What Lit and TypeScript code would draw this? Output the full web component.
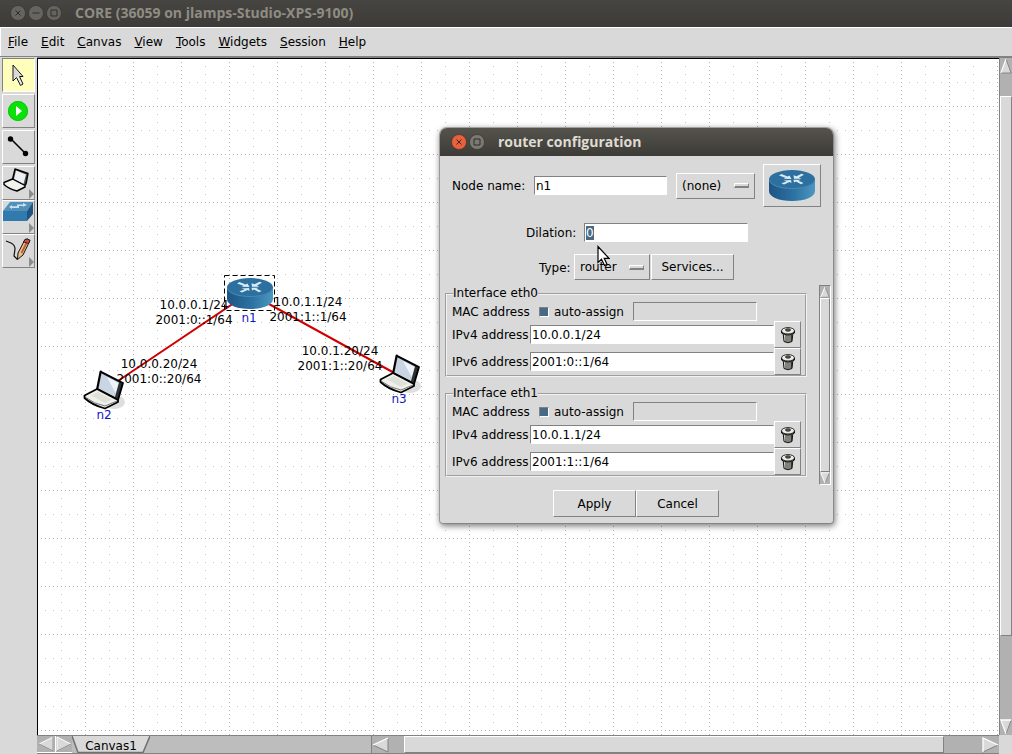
import { LitElement, html, svg, css } from "lit";
import { customElement, property } from "lit/decorators.js";
import { classMap } from "lit/directives/class-map.js";

const router = svg`
  <defs>
    <linearGradient id="side" x1="0" x2="1" y1="0" y2="0">
      <stop offset="0" stop-color="#1f5482"></stop>
      <stop offset="0.55" stop-color="#2c73a3"></stop>
      <stop offset="1" stop-color="#4d97c1"></stop>
    </linearGradient>
  </defs>
  <path d="M0 9V21C0 27 10 31 23 31S46 27 46 21V9Z" fill="url(#side)"></path>
  <ellipse cx="23" cy="9.500" rx="23" ry="9.500" fill="#2d6f9f"></ellipse>
  <path d="M0.500 10C1 15 11 18.500 23 18.500S45 15 45.500 10" fill="none" stroke="#5b9cc4" stroke-width="0.600"></path>
  <g fill="#d8ecf5">
    <path d="M10 5.500L12.500 4L18.500 6.600L20.500 5.500L22.500 9L14.500 8.800L16.500 7.800Z"></path>
    <path d="M25 8.800L24.500 5.200L27.500 6.200L32.500 3.800L35 4.800L30 7.500L32.500 8.800Z"></path>
    <path d="M12.500 13.200L15 14.500L20.500 12L22.500 13L22 9.900L14.500 10.400L17.500 11.400Z"></path>
    <path d="M34.500 13L32 14.200L27 11.600L25 12.600L24.500 9.800L31.500 9.800L29.500 10.700Z"></path>
  </g>`;

const laptop = svg`
  <ellipse cx="31" cy="32" rx="11" ry="7" fill="#000" opacity="0.130"></ellipse>
  <path d="M17.500 1.500L40 13L35 30L14 19Z" fill="#2b3034" stroke="#000" stroke-width="1.800" stroke-linejoin="round"></path>
  <path d="M18.500 3.500L36 12.500L32 27L15.500 18.500Z" fill="#c9d5e2"></path>
  <path d="M24 7L35.500 13L32.500 23Z" fill="#eef3f8"></path>
  <path d="M1.500 25.500L14 19L35 30V32L22 38.500Q9 35 1.500 28Z" fill="#f0f0ea" stroke="#000" stroke-width="1.800" stroke-linejoin="round"></path>
  <path d="M8 25.500L15 22L29 29.500L22 33Z" fill="#e0e0da"></path>
  <path d="M2 27Q11 34 22 36L34 31" fill="none" stroke="#555" stroke-width="0.800"></path>`;

const trash = html`<svg viewBox="0 0 16 18" width="16" height="18" aria-hidden="true">
  <path d="M3 6L4 15.500Q8 18 12 15.500L13 6Z" fill="#d0d0c8" stroke="#111"></path>
  <path d="M6 8.500V16M8 9V16.500M10 9V16M11.500 8.500V15" stroke="#222" stroke-width="0.900"></path>
  <path d="M1.500 5V7Q8 11 14.500 7V5Z" fill="#b8b8b0" stroke="#111"></path>
  <ellipse cx="8" cy="4.800" rx="6.500" ry="3.200" fill="#ecece4" stroke="#111" stroke-width="0.900"></ellipse>
  <ellipse cx="8" cy="4" rx="2.600" ry="1.300" fill="#555" stroke="#222" stroke-width="0.700"></ellipse>
</svg>`;

const bevel = css`
  * { box-sizing: border-box; }
  button, input, select, legend, fieldset { font: inherit; color: inherit; margin: 0; border-radius: 0; }
  button, select { appearance: none; background: #d9d9d9; border: 1px solid; border-color: #fff #828282 #828282 #fff; padding: 0; outline: none; }
  svg { display: block; }
  .titlebar { display: flex; align-items: center; font: bold 14px/18px "Open Sans", "Noto Sans", sans-serif; }
  .wm { display: flex; gap: 2px; }
  .wm button { width: 16px; height: 16px; border: 0; background: none; }
`;

@customElement("wm-glyph")
class WmGlyph extends LitElement {
  @property() kind = "close";
  @property() fill = "#66645e";
  static styles = css`:host { display: block; } svg { display: block; }`;
  render() {
    const marks: Record<string, string> = {
      close: "M5.500 5.500L10.500 10.500M10.500 5.500L5.500 10.500",
      min: "M4.500 8H11.500",
      max: "M5 5H11V11H5Z",
    };
    return html`<svg viewBox="0 0 16 16" width="16" height="16">
      <circle cx="8" cy="8" r="7.500" fill=${this.fill} stroke="#33322e" stroke-width="0.600"></circle>
      <path d=${marks[this.kind]} fill="none" stroke="#302e2a" stroke-width="1"></path>
    </svg>`;
  }
}

@customElement("tk-scrollbar")
class TkScrollbar extends LitElement {
  @property({ type: Boolean, reflect: true }) vertical = false;
  @property({ type: Number }) before = 0;
  @property({ type: Number }) thumb = 1;
  @property({ type: Number }) after = 0;
  @property({ type: Number }) arrowSize = 16;
  static styles = [bevel, css`
    :host { display: flex; background: #b1b1b1; min-width: 0; min-height: 0; }
    :host([vertical]) { flex-direction: column; }
    button { flex: none; border: 0; background: none; }
    .track { flex: 1; display: flex; min-width: 0; min-height: 0; }
    :host([vertical]) .track { flex-direction: column; }
    .thumb { background: #d9d9d9; border: 1px solid; border-color: #fff #828282 #828282 #fff; }
  `];
  arrow(dir: string) {
    const shapes: Record<string, string[]> = {
      up: ["M7 1L13 15H1Z", "M1 15L7 1", "M7 1L13 15H1"],
      down: ["M1 1H13L7 15Z", "M13 1H1L7 15", "M13 1L7 15"],
      left: ["M1 8L16 1V15Z", "M1 8L16 1", "M16 1V15L1 8"],
      right: ["M1 1L16 8L1 15Z", "M1 15V1L16 8", "M16 8L1 15"],
    };
    const [face, light, dark] = shapes[dir];
    const w = this.vertical ? 14 : 17;
    return html`<svg viewBox="0 0 ${w} 16" width=${this.vertical ? "100%" : w} height=${this.arrowSize} preserveAspectRatio="none">
      <path d=${face} fill="#d9d9d9"></path>
      <path d=${dark} fill="none" stroke="#828282"></path>
      <path d=${light} fill="none" stroke="#fff" stroke-width="1.300"></path>
    </svg>`;
  }
  render() {
    return html`
      <button aria-label="Scroll back">${this.arrow(this.vertical ? "up" : "left")}</button>
      <div class="track">
        <div style="flex:${this.before}"></div>
        <div class="thumb" style="flex:${this.thumb}"></div>
        <div style="flex:${this.after}"></div>
      </div>
      <button aria-label="Scroll forward">${this.arrow(this.vertical ? "down" : "right")}</button>`;
  }
}

@customElement("router-dialog")
class RouterDialog extends LitElement {
  static styles = [bevel, css`
    :host { display: block; background: #d9d9d9; border-radius: 7px 7px 3px 3px; box-shadow: 0 0 0 1px #77777788, 1px 2px 6px 1px #00000088; }
    .titlebar { height: 28px; padding-left: 11px; gap: 13px; color: #dfdbd2; background: linear-gradient(#55534c, #3c3b37); border-radius: 7px 7px 0 0; }
    .body { padding: 8px 2px 6px 5px; }
    .row { display: flex; align-items: center; }
    .row label { padding-top: 2px; }
    .name { height: 43px; padding: 0 10px 0 7px; }
    .name label { width: 82px; }
    .name input { width: 133px; margin-right: 9px; }
    .name .icon { width: 58px; height: 43px; margin-left: auto; display: grid; place-items: center; }
    .dilation { margin-top: 16px; padding-left: 81px; }
    .dilation label { width: 58px; }
    .dilation input { width: 164px; }
    .type { margin-top: 12px; padding-left: 94px; }
    .type label { width: 35px; }
    .type .services { width: 83px; height: 26px; margin-left: 1px; }
    .entry { height: 19px; padding: 0 1px; border: 1px solid; border-color: #828282 #fff #fff #828282; background: #fff; line-height: 17px; outline: none; }
    .entry:disabled { background: #d9d9d9; }
    .entry::selection { background: #4a6984; color: #fff; }
    .menu { display: grid; align-items: center; }
    .menu > * { grid-area: 1 / 1; }
    .menu select { height: 26px; padding: 1px 5px 0; }
    .menu i { justify-self: end; width: 15px; height: 5px; margin-right: 6px; pointer-events: none; background: #d9d9d9; border: 1px solid; border-color: #fff #828282 #828282 #fff; border-bottom-width: 2px; }
    .pick { width: 79px; }
    .kind { width: 76px; }
    .list { display: flex; justify-content: space-between; margin-top: 5px; height: 200px; }
    .frames { width: 362px; display: flex; flex-direction: column; gap: 9px; padding-top: 1px; }
    fieldset { min-width: 0; padding: 0 4px 0 5px; border: 2px groove #f2f2f2; }
    legend { padding: 0; margin-left: 1px; height: 15px; line-height: 15px; }
    .mac { height: 20px; }
    .addr { height: 27px; }
    .row .tag { width: 78px; white-space: nowrap; }
    .addr .entry { flex: 1; min-width: 0; }
    .addr button { width: 27px; height: 27px; display: grid; place-items: center; }
    .check { display: flex; align-items: center; gap: 5px; width: 94px; margin: 0 0 0 9px; }
    .check input { appearance: none; width: 10px; height: 10px; border: 1px solid; border-color: #828282 #fff #fff #828282; }
    .check input:checked { background: #4a6984; }
    .mac .entry { width: 124px; }
    tk-scrollbar { width: 12px; border: 1px solid; border-color: #828282 #fff #fff #828282; }
    .actions { display: flex; justify-content: center; margin-top: 5px; padding-right: 4px; }
    .actions button { width: 83px; height: 27px; padding-top: 1px; }
  `];

  firstUpdated() {
    const field = this.renderRoot.querySelector<HTMLInputElement>("#dilation");
    field?.focus();
    field?.select();
  }

  iface(name: string, v4: string, v6: string) {
    return html`<fieldset>
      <legend>Interface ${name}</legend>
      <div class="row mac">
        <label class="tag" for="${name}-mac">MAC address</label>
        <label class="check"><input type="checkbox" checked>auto-assign</label>
        <input class="entry" id="${name}-mac" disabled>
      </div>
      ${[["IPv4", v4], ["IPv6", v6]].map(([kind, value]) => html`
        <div class="row addr">
          <label class="tag" for="${name}-${kind}">${kind} address</label>
          <input class="entry" id="${name}-${kind}" .value=${value}>
          <button aria-label="Clear ${kind} address">${trash}</button>
        </div>`)}
    </fieldset>`;
  }

  render() {
    return html`
      <header class="titlebar">
        <div class="wm">
          <button aria-label="Close"><wm-glyph kind="close" fill="#e9603a"></wm-glyph></button>
          <button aria-label="Maximize"><wm-glyph kind="max" fill="#7b7971"></wm-glyph></button>
        </div>
        router configuration
      </header>
      <div class="body">
        <div class="row name">
          <label for="name">Node name:</label>
          <input class="entry" id="name" value="n1">
          <span class="menu pick"><select aria-label="Location"><option>(none)</option></select><i></i></span>
          <button class="icon" aria-label="Node icon"><svg viewBox="0 0 46 31" width="46" height="31">${router}</svg></button>
        </div>
        <div class="row dilation">
          <label for="dilation">Dilation:</label>
          <input class="entry" id="dilation" value="0">
        </div>
        <div class="row type">
          <label for="type">Type:</label>
          <span class="menu kind"><select id="type"><option>router</option></select><i></i></span>
          <button class="services">Services...</button>
        </div>
        <div class="list">
          <div class="frames">
            ${this.iface("eth0", "10.0.0.1/24", "2001:0::1/64")}
            ${this.iface("eth1", "10.0.1.1/24", "2001:1::1/64")}
          </div>
          <tk-scrollbar vertical .arrowSize=${12} .before=${0} .thumb=${1} .after=${0}></tk-scrollbar>
        </div>
        <div class="actions"><button>Apply</button><button>Cancel</button></div>
      </div>`;
  }
}

const tools = [
  { id: "select", more: false, art: svg`<path d="M10 6V22L13.500 18.500L17.500 26.500L20 25L16.500 17.500H20Z" fill="#e8e8e8" stroke="#111"></path><path d="M11 9V19L18 16.500Z" fill="#d8d8d8"></path>` },
  { id: "start", more: false, art: svg`<circle cx="15" cy="16" r="10" fill="#0be00b"></circle><circle cx="15" cy="16" r="9.500" fill="none" stroke="#08c808"></circle><path d="M13 11L19 16L13 21Z" fill="#fff"></path>` },
  { id: "link", more: false, art: svg`<path d="M8 8L22 22" stroke="#000" stroke-width="1.600"></path><circle cx="7.500" cy="8" r="2.700"></circle><circle cx="22.500" cy="22.500" r="2.700"></circle>` },
  { id: "host", more: true, art: svg`<path d="M12 2L25 6.500L23 17L21 19L9.500 12.500Z" fill="#555" stroke="#000" stroke-width="1.400" stroke-linejoin="round"></path><path d="M13 3.500L23 7.500L20.500 17L11 12Z" fill="#eef1f4"></path><path d="M1 15.500L9.500 12L22 18.500V20L14 24Q6 22 1 17.500Z" fill="#f3f3ee" stroke="#000" stroke-width="1.400" stroke-linejoin="round"></path>` },
  { id: "switch", more: true, art: svg`<path d="M0 10L7 1H30L24 10Z" fill="#5090ba"></path><path d="M24 10L30 1V13L24 20Z" fill="#1f5480"></path><path d="M0 10H24V20H0Z" fill="#317aae"></path><path d="M6 6L9 4V5.200H14V3.500H20V2L24 4L20 5.800V5H16V7H9V8Z" fill="#c9e2ef"></path>` },
  { id: "marker", more: true, art: svg`<path d="M3 6L8 8Q12 10 12 14L11 21L14.500 24.500" fill="none" stroke="#111" stroke-width="1.200"></path><path d="M14.500 24.500L15 18L22 4.500Q25 3 27 5.500L20 20Z" fill="#e8c08c" stroke="#111"></path><path d="M18.500 18L24 7" stroke="#c05a30" stroke-width="1.800"></path><path d="M22 4.500Q25 3 27 5.500L25.500 8.500L20.500 7Z" fill="#c84a44" stroke="#111" stroke-width="0.800"></path>` },
];

@customElement("app-root")
class AppRoot extends LitElement {
  static styles = [bevel, css`
    :host { display: flex; flex-direction: column; height: 100vh; position: relative; overflow: hidden; background: #d9d9d9; color: #000; font: 12px/15px "DejaVu Sans", sans-serif; }
    .titlebar { flex: none; height: 27px; padding: 0 0 1px 10px; gap: 13px; color: #8f8c83; background: linear-gradient(#464541, #3c3b37); }
    .menubar { flex: none; display: flex; height: 29px; padding: 0 1px; border-top: 1px solid #fff; border-left: 1px solid #fff; }
    .menubar button { border: 0; padding: 0 6px; margin-right: 1px; }
    .main { flex: 1; min-height: 0; display: flex; border-top: 1px solid #828282; }
    .tools { flex: none; width: 37px; padding: 1px 2px 0 2px; display: flex; flex-direction: column; }
    .tools button { display: block; height: 34px; }
    .tools .spaced { margin-bottom: 2px; }
    .tools .active { background: #ffffbb; border-color: #828282 #fff #fff #828282; }
    .work { flex: 1; min-width: 0; display: grid; grid-template: minmax(0, 1fr) 19px / minmax(0, 1fr) 13px; border-top: 1px solid #828282; }
    .canvas { border: 1px solid #000; border-width: 1px 0 0 1px; background: #fff; }
    .canvas svg { width: 100%; height: 100%; overflow: hidden; }
    .name { fill: #1414c8; }
    .vbar { border-left: 1px solid #828282; }
    .foot { display: flex; border-top: 1px solid #828282; border-bottom: 1px solid #828282; background: #bdbdbd; }
    .tabs { flex: 0 0 334px; display: flex; }
    .pager { flex: none; display: flex; padding-left: 1px; width: 35px; background: #b1b1b1; border-bottom: 1px solid #fff; }
    .pager button { flex: 1; border: 0; background: none; }
    .tab { display: grid; border: 0; background: none; width: 78px; }
    .tab > * { grid-area: 1 / 1; }
    .tab span { align-self: center; padding-top: 3px; }
    .hbar { flex: 1; border-left: 1px solid #828282; }
    .dialog { position: absolute; left: 440px; top: 128px; width: 393px; }
    .pointer { position: absolute; left: 596px; top: 245px; }
  `];

  render() {
    const menus = ["File", "Edit", "Canvas", "View", "Tools", "Widgets", "Session", "Help"];
    return html`
      <header class="titlebar">
        <div class="wm">
          ${["close", "min", "max"].map((k) => html`<button aria-label=${k}><wm-glyph kind=${k}></wm-glyph></button>`)}
        </div>
        CORE (36059 on jlamps-Studio-XPS-9100)
      </header>
      <nav class="menubar">${menus.map((m) => html`<button><u>${m[0]}</u>${m.slice(1)}</button>`)}</nav>
      <div class="main">
        <div class="tools">
          ${tools.map((t) => html`<button aria-label=${t.id} class=${classMap({ active: t.id === "select", spaced: !t.more })}>
            <svg viewBox="0 0 31 32" width="31" height="32">${t.art}
              ${t.more ? svg`<path d="M26 22L31 27L26 32Z" fill="#8c8c8c"></path>` : ""}</svg>
          </button>`)}
        </div>
        <div class="work">
          <div class="canvas">${this.topology()}</div>
          <tk-scrollbar class="vbar" vertical .before=${22} .thumb=${541} .after=${83}></tk-scrollbar>
          <div class="foot">
            <div class="tabs">
              <div class="pager">
                <button aria-label="Previous canvas"><svg viewBox="0 0 17 16" width="17" height="16"><path d="M1 8L15 1V15Z" fill="#d9d9d9" stroke="#fff"></path><path d="M15 1V15L1 8" fill="none" stroke="#828282"></path></svg></button>
                <button aria-label="Next canvas"><svg viewBox="0 0 17 16" width="17" height="16"><path d="M0.500 0V16" stroke="#fff"></path><path d="M2 1L16 8L2 15Z" fill="#d9d9d9" stroke="#fff"></path><path d="M16 8L2 15" fill="none" stroke="#828282"></path></svg></button>
              </div>
              <button class="tab">
                <svg viewBox="0 0 78 17" width="78" height="17"><path d="M0 0L6 16H71L78 0Z" fill="#d9d9d9"></path><path d="M0 0L6 16.500H71L78 0" fill="none" stroke="#707070" stroke-width="1.500"></path></svg>
                <span>Canvas1</span>
              </button>
            </div>
            <tk-scrollbar class="hbar" .before=${15} .thumb=${540} .after=${38}></tk-scrollbar>
          </div>
        </div>
      </div>
      <router-dialog class="dialog"></router-dialog>
      <svg class="pointer" viewBox="0 0 14 22" width="14" height="22"><path d="M2 1.500V17.500L5.500 14.300L8.500 20.500L11 19.300L8.200 13.300H13Z" fill="#fff" stroke="#000" stroke-width="1.200"></path></svg>
    `;
  }

  topology() {
    const labels: [number, number, string, string][] = [
      [156, 250, "10.0.0.1/24", "2001:0::1/64"],
      [270, 247, "10.0.1.1/24", "2001:1::1/64"],
      [121, 309, "10.0.0.20/24", "2001:0::20/64"],
      [302, 296, "10.0.1.20/24", "2001:1::20/64"],
    ];
    return html`<svg>
      <defs>
        <pattern id="grid" width="48" height="48" patternUnits="userSpaceOnUse">
          <g fill="none" shape-rendering="crispEdges">
            <path d="M23.500 0V48M0 23.500H48" stroke="#c6c6c6" stroke-dasharray="1 7" stroke-dashoffset="1"></path>
            <path d="M47.500 0V48M0 47.500H48" stroke="#b4b4b4" stroke-dasharray="1 3" stroke-dashoffset="1"></path>
          </g>
        </pattern>
      </defs>
      <rect width="100%" height="100%" fill="url(#grid)"></rect>
      <path d="M65 332L211 234L360 316" fill="none" stroke="#d00000" stroke-width="2"></path>
      <g text-anchor="middle">
        ${labels.map(([x, y, a, b]) => svg`<text x=${x} y=${y}>${a}</text><text x=${x} y=${y + 15}>${b}</text>`)}
      </g>
      <g transform="translate(189 219)">${router}</g>
      <g transform="translate(45 311)">${laptop}</g>
      <g transform="translate(341 295)">${laptop}</g>
      <rect x="186.500" y="216.500" width="50" height="35" fill="none" stroke="#000" stroke-dasharray="5 3"></rect>
      <g class="name" text-anchor="middle">
        <text x="211" y="263">n1</text><text x="66" y="360">n2</text><text x="361" y="344">n3</text>
      </g>
    </svg>`;
  }
}
